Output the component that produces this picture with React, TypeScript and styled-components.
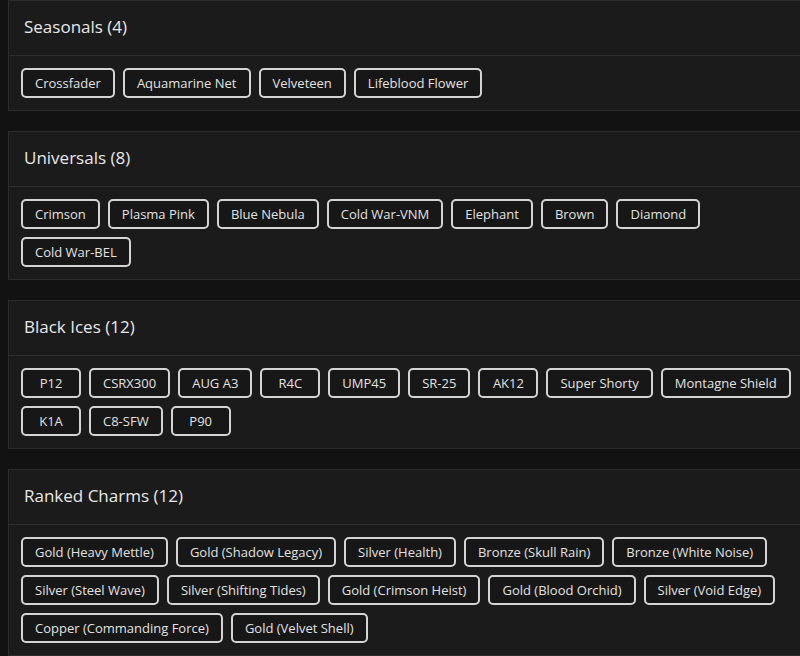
import React from "react";
import styled, { createGlobalStyle } from "styled-components";

const Global = createGlobalStyle`
  html, body {
    margin: 0;
    padding: 0;
    background: #121212;
    overflow: hidden;
  }
  body {
    font-family: "Open Sans", "Noto Sans", sans-serif;
    color: #e6e6e6;
  }
`;

const Page = styled.div`
  padding: 0 0 0 8px;
  display: flex;
  flex-direction: column;
  gap: 20px;
`;

const Card = styled.section`
  width: 800px;
  background: #1b1b1b;
  border: 1px solid #2c2c2c;
  box-sizing: border-box;
`;

const Header = styled.div`
  box-sizing: border-box;
  height: 55px;
  display: flex;
  align-items: center;
  padding: 0 15px 3px;
  border-bottom: 1px solid #2e2e2e;
`;

const Title = styled.h2`
  margin: 0;
  font-size: 17px;
  font-weight: 500;
  color: #e8e8e8;
`;

const Chips = styled.div`
  display: flex;
  flex-wrap: wrap;
  gap: 8px;
  padding: 12px 12px;
`;

const Chip = styled.span`
  box-sizing: border-box;
  height: 30px;
  min-width: 60px;
  padding: 0 12px;
  display: inline-flex;
  align-items: center;
  justify-content: center;
  border: 2px solid #d4d4d4;
  border-radius: 5px;
  background: #171717;
  color: #e2e2e2;
  font-size: 13px;
  white-space: nowrap;
`;

const sections: { title: string; items: string[] }[] = [
  { title: "Seasonals", items: ["Crossfader", "Aquamarine Net", "Velveteen", "Lifeblood Flower"] },
  {
    title: "Universals",
    items: ["Crimson", "Plasma Pink", "Blue Nebula", "Cold War-VNM", "Elephant", "Brown", "Diamond", "Cold War-BEL"],
  },
  {
    title: "Black Ices",
    items: ["P12", "CSRX300", "AUG A3", "R4C", "UMP45", "SR-25", "AK12", "Super Shorty", "Montagne Shield", "K1A", "C8-SFW", "P90"],
  },
  {
    title: "Ranked Charms",
    items: [
      "Gold (Heavy Mettle)",
      "Gold (Shadow Legacy)",
      "Silver (Health)",
      "Bronze (Skull Rain)",
      "Bronze (White Noise)",
      "Silver (Steel Wave)",
      "Silver (Shifting Tides)",
      "Gold (Crimson Heist)",
      "Gold (Blood Orchid)",
      "Silver (Void Edge)",
      "Copper (Commanding Force)",
      "Gold (Velvet Shell)",
    ],
  },
];

export default function App() {
  return (
    <>
      <Global />
      <Page>
        {sections.map((s) => (
          <Card key={s.title}>
            <Header>
              <Title>
                {s.title} ({s.items.length})
              </Title>
            </Header>
            <Chips>
              {s.items.map((it) => (
                <Chip key={it}>{it}</Chip>
              ))}
            </Chips>
          </Card>
        ))}
      </Page>
    </>
  );
}
